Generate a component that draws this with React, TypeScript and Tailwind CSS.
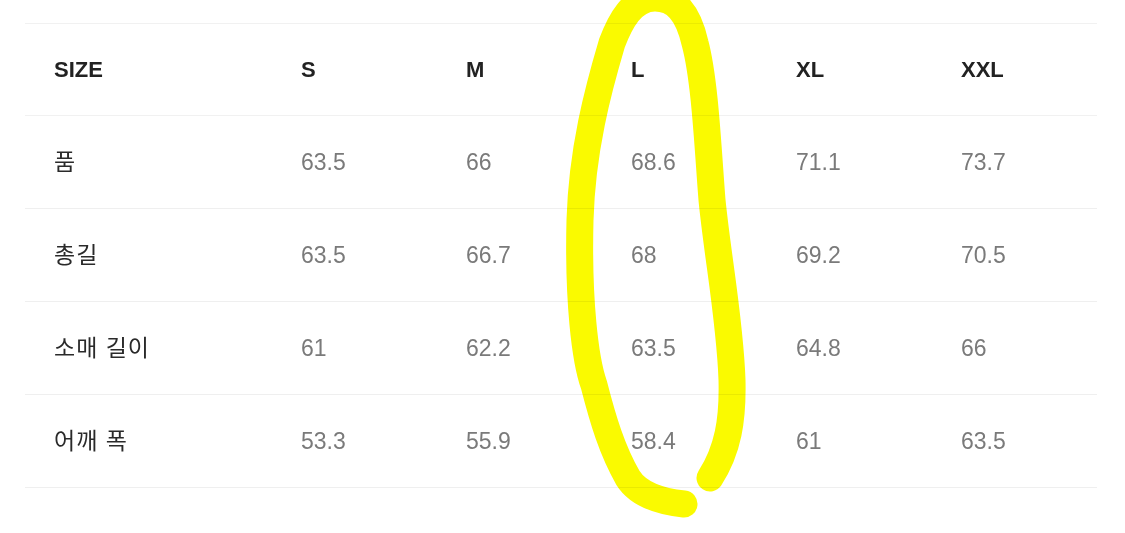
import React from "react";

const header = ["SIZE", "S", "M", "L", "XL", "XXL"];
const rows: [string, string[]][] = [
  ["품", ["63.5", "66", "68.6", "71.1", "73.7"]],
  ["총길", ["63.5", "66.7", "68", "69.2", "70.5"]],
  ["소매 길이", ["61", "62.2", "63.5", "64.8", "66"]],
  ["어깨 폭", ["53.3", "55.9", "58.4", "61", "63.5"]],
];

export default function App() {
  return (
    <div
      className="relative w-[1125px] h-[533px] overflow-hidden bg-white pt-[23px] pl-[25px]"
      style={{ fontFamily: '"Liberation Sans", Arial, "Noto Sans CJK KR", sans-serif' }}
    >
      <div className="w-[1072px] border-t border-[#f1f1f1]">
        <div className="grid grid-cols-[247px_repeat(5,165px)] items-center h-[92px] border-b border-[#f1f1f1]">
          {header.map((h) => (
            <div key={h} className="pl-[29px] text-[22px] font-bold text-[#222]">
              {h}
            </div>
          ))}
        </div>
        {rows.map(([label, vals]) => (
          <div
            key={label}
            className="grid grid-cols-[247px_repeat(5,165px)] items-center h-[93px] border-b border-[#efefef]"
          >
            <div className="pl-[29px] text-[23px] tracking-[1px] text-[#2a2a2a]">{label}</div>
            {vals.map((v, i) => (
              <div key={i} className="pl-[29px] text-[23px] text-[#7a7a7a]">
                {v}
              </div>
            ))}
          </div>
        ))}
      </div>
      <svg
        className="absolute left-0 top-0 pointer-events-none mix-blend-multiply"
        width="1125"
        height="533"
        viewBox="0 0 1125 533"
      >
        <path
          d="M 710 478 C 728 450, 733 420, 732 380 C 730 320, 718 260, 712 200 C 708 150, 705 80, 695 43 C 688 12, 675 -2, 655 -2 C 632 -2, 620 22, 612 43 C 598 90, 582 150, 580 220 C 578 300, 585 360, 594 385 C 603 420, 612 450, 628 478 C 640 497, 665 502, 684 504"
          fill="none"
          stroke="#fafa00"
          strokeWidth="27"
          strokeLinecap="round"
          strokeLinejoin="round"
        />
      </svg>
    </div>
  );
}
